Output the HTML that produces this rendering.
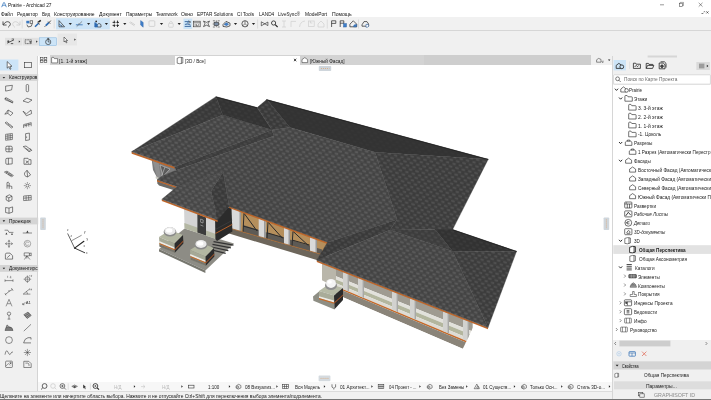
<!DOCTYPE html>
<html lang="ru"><head><meta charset="utf-8"><title>Prairie - Archicad 27</title>
<style>
html,body{margin:0;padding:0;}
body{width:711px;height:400px;overflow:hidden;background:#fff;position:relative;
 font-family:"Liberation Sans","DejaVu Sans",sans-serif;color:#222;font-size:4.6px;line-height:1;}
.a{position:absolute;}
.t{position:absolute;white-space:nowrap;transform-origin:0 50%;}
svg{position:absolute;left:0;top:0;overflow:visible;}
</style></head><body><div id="app" style="will-change:opacity;position:absolute;left:0;top:0;width:711px;height:400px;overflow:hidden">
<div class="a" style="left:0.0px;top:17.0px;width:711.0px;height:13.4px;background:#f1f1f1;"></div>
<div class="a" style="left:0.0px;top:30.3px;width:711.0px;height:0.7px;background:#d6d6d6;"></div>
<div class="a" style="left:0.0px;top:31.0px;width:711.0px;height:24.5px;background:#f0f0f0;"></div>
<div class="a" style="left:38.5px;top:55.3px;width:552.0px;height:9.5px;background:#d3d3d3;"></div>
<div class="a" style="left:38.5px;top:55.3px;width:11.5px;height:9.5px;background:#f4f4f4;"></div>
<div class="a" style="left:174.6px;top:55.6px;width:125.4px;height:9.2px;background:#fff;"></div>
<div class="a" style="left:424.0px;top:55.3px;width:166.5px;height:9.5px;background:#cecece;"></div>
<div class="a" style="left:590.5px;top:55.3px;width:22.0px;height:9.5px;background:#f0f0f0;"></div>
<div class="a" style="left:0.0px;top:55.5px;width:38.4px;height:335.2px;background:#f0f0f0;border-right:.6px solid #d4d4d4;box-sizing:border-box;"></div>
<div class="a" style="left:612.3px;top:55.5px;width:98.7px;height:344.5px;background:#f0f0f0;border-left:.6px solid #d6d6d6;box-sizing:border-box;"></div>
<div class="a" style="left:613.2px;top:84.6px;width:97.8px;height:255.6px;background:#fff;"></div>
<div class="a" style="left:38.4px;top:382.0px;width:574.0px;height:9.2px;background:#f7f7f7;"></div>
<div class="a" style="left:0.0px;top:390.8px;width:612.3px;height:9.2px;background:#f1f1f1;"></div>
<div class="a" style="left:0.0px;top:390.7px;width:612.3px;height:0.6px;background:#dcdcdc;"></div>
<div class="a" style="left:0.0px;top:399.0px;width:711.0px;height:1.0px;background:#777;"></div>
<svg width="711" height="400" viewBox="0 0 711 400">
<defs>
<pattern id="sh" width="6.4" height="6.6" patternUnits="userSpaceOnUse" patternTransform="matrix(1 .26 -.12 1 0 0)">
<ellipse cx="1.9" cy="1.6" rx="1.9" ry="1.0" fill="#fff" opacity=".10"/>
<ellipse cx="5.1" cy="4.9" rx="1.9" ry="1.0" fill="#fff" opacity=".10"/>
<ellipse cx="5.1" cy="1.7" rx="1.3" ry=".9" fill="#000" opacity=".10"/>
<ellipse cx="1.9" cy="5.0" rx="1.3" ry=".9" fill="#000" opacity=".10"/>
<path d="M0 3.3 H6.4 M0 6.6 H6.4" stroke="#000" stroke-width=".5" opacity=".10"/>
</pattern>
</defs>
<polygon points="151.6,158.5 175.0,167.0 175.0,181.0 161.0,179.0 157.0,177.5 153.0,170.0" fill="#7b7b7b" />
<polygon points="152.4,160.0 158.6,162.6 161.0,178.6 157.0,177.0" fill="#8f8f8f" />
<path d="M160 165 L170 169 L163 176.5 Z M165 167 L161.5 176" stroke="#b9b9b9" stroke-width=".7" fill="#5b5b5b"/>
<polygon points="155.6,176.6 160.8,178.6 160.6,180.2 155.8,178.4" fill="#c9c9c0" />
<polygon points="157.2,181.0 176.5,187.6 176.5,191.0 159.0,185.6 157.4,183.4" fill="#6b6b68" />
<polygon points="229.0,205.6 328.0,242.3 326.0,255.7 229.0,228.0" fill="#b58f5c" />
<polygon points="243.0,225.0 322.0,249.6 322.0,254.6 243.0,232.0" fill="#5d5a55" />
<polygon points="231.0,207.4 241.0,211.1 241.0,231.9 231.0,229.0" fill="#d9d9d9" />
<polygon points="239.5,211.1 241.0,211.1 241.0,231.9 239.5,231.9" fill="#9a9a9a" />
<polygon points="258.7,217.6 265.5,220.1 265.5,238.9 258.7,237.0" fill="#d9d9d9" />
<polygon points="264.0,220.1 265.5,220.1 265.5,238.9 264.0,238.9" fill="#9a9a9a" />
<polygon points="284.0,227.0 290.0,229.2 290.0,245.9 284.0,244.2" fill="#d9d9d9" />
<polygon points="288.5,229.2 290.0,229.2 290.0,245.9 288.5,245.9" fill="#9a9a9a" />
<polygon points="310.0,236.6 317.0,239.2 317.0,253.6 310.0,251.6" fill="#d9d9d9" />
<polygon points="315.5,239.2 317.0,239.2 317.0,253.6 315.5,253.6" fill="#9a9a9a" />
<path d="M244.0 213.2 L257.0 231.0 M244.0 213.2 L243.0 232.0 M243.0 226.0 L258.0 230.3" stroke="#2b2b2b" stroke-width="1" fill="none"/>
<path d="M268.0 222.1 L282.5 238.3 M268.0 222.1 L267.0 238.8 M267.0 232.8 L283.5 237.6" stroke="#2b2b2b" stroke-width="1" fill="none"/>
<path d="M293.0 231.3 L308.5 245.7 M293.0 231.3 L292.0 246.0 M292.0 240.0 L309.5 245.0" stroke="#2b2b2b" stroke-width="1" fill="none"/>
<polygon points="229.0,228.0 327.0,256.0 325.0,262.4 229.0,233.6" fill="#6d665b" />
<path d="M229 228.0 L326 255.7" stroke="#a8672f" stroke-width=".8" fill="none"/>
<clipPath id="rwc"><polygon points="318.0,250.0 474.2,321.1 474.2,325.1 462.8,348.8 318.0,286.6"/></clipPath>
<g clip-path="url(#rwc)">
<polygon points="322.0,262.2 336.0,267.7 336.0,287.4 322.0,280.2" fill="#b9b6aa" />
<polygon points="336.0,267.7 472.7,321.5 472.7,331.6 336.0,276.2" fill="#9f9b91" />
<polygon points="336.0,276.2 472.7,331.6 472.7,335.3 336.0,279.4" fill="#e2e1db" />
<polygon points="336.0,279.4 472.7,335.3 472.7,340.0 336.0,283.3" fill="#b3b69e" />
<polygon points="336.0,283.3 472.7,340.0 472.7,343.4 336.0,286.2" fill="#dddcd5" />
<polygon points="336.0,286.2 472.7,343.4 472.7,345.2 336.0,287.7" fill="#c56a2a" />
<polygon points="336.0,287.7 472.7,345.2 472.7,353.1 336.0,294.3" fill="#8a8479" />
<polygon points="343.0,271.9 349.0,274.2 349.0,291.6 343.0,289.1" fill="#d2d2cf" />
<polygon points="347.6,273.7 349.0,274.2 349.0,291.6 347.6,291.0" fill="#a8a8a6" />
<polygon points="358.0,277.8 364.0,280.1 364.0,297.9 358.0,295.4" fill="#d2d2cf" />
<polygon points="362.6,279.6 364.0,280.1 364.0,297.9 362.6,297.3" fill="#a8a8a6" />
<polygon points="392.0,291.2 398.0,293.6 398.0,312.1 392.0,309.6" fill="#d2d2cf" />
<polygon points="396.6,293.0 398.0,293.6 398.0,312.1 396.6,311.5" fill="#a8a8a6" />
<polygon points="410.0,298.3 416.0,300.7 416.0,319.7 410.0,317.1" fill="#d2d2cf" />
<polygon points="414.6,300.1 416.0,300.7 416.0,319.7 414.6,319.1" fill="#a8a8a6" />
<polygon points="443.0,311.3 449.0,313.7 449.0,333.5 443.0,331.0" fill="#d2d2cf" />
<polygon points="447.6,313.2 449.0,313.7 449.0,333.5 447.6,332.9" fill="#a8a8a6" />
<polygon points="463.0,319.2 469.0,321.6 469.0,341.8 463.0,339.3" fill="#d2d2cf" />
<polygon points="467.6,321.1 469.0,321.6 469.0,341.8 467.6,341.3" fill="#a8a8a6" />
</g>
<polygon points="313.0,296.5 319.0,291.5 334.4,296.0 334.6,309.5 313.4,300.8" fill="#8e8e84" />
<polygon points="319.0,291.0 329.0,284.0 343.0,288.0 334.0,295.4" fill="#b6baa6" />
<polygon points="319.0,291.0 334.0,295.4 334.2,303.5 319.0,298.6" fill="#a9ac99" />
<polygon points="319.0,296.2 334.0,300.6 334.0,302.4 319.0,298.0" fill="#ecebe6" />
<polygon points="319.0,298.0 334.0,302.4 334.0,303.7 319.0,299.3" fill="#c56a2a" />
<polygon points="334.0,295.4 343.0,288.0 343.0,300.0 334.5,309.3" fill="#2b2b2b" />
<polygon points="334.1,302.4 343.0,294.4 343.0,295.6 334.1,303.7" fill="#a9562a" />
<ellipse cx="331" cy="285.4" rx="6" ry="4.6" fill="#8f8f8f"/>
<ellipse cx="331" cy="283.4" rx="5" ry="4.5" fill="#f4f4f4"/>
<ellipse cx="329.6" cy="282" rx="2.2" ry="1.8" fill="#fff"/>
<polygon points="159.0,249.0 184.6,228.4 234.0,243.4 205.4,270.6" fill="#8d8c85" />
<polygon points="159.0,249.0 205.4,270.6 205.4,273.0 159.0,251.4" fill="#77776f" />
<path d="M213.5 241.6 L233.5 245.2" stroke="#333" stroke-width="1.2"/>
<path d="M212.5 244.3 L230.9 247.9" stroke="#333" stroke-width="1.2"/>
<path d="M211.5 247.0 L228.3 250.6" stroke="#333" stroke-width="1.2"/>
<path d="M210.5 249.7 L225.7 253.3" stroke="#333" stroke-width="1.2"/>
<polygon points="184.0,207.0 216.0,220.0 216.0,239.0 184.6,228.4" fill="#d4d4d4" />
<polygon points="184.3,223.0 216.0,234.0 216.0,239.0 184.6,228.4" fill="#b4b7a3" />
<polygon points="197.4,214.0 206.0,217.4 206.0,235.4 197.4,232.4" fill="#3c3c3c" />
<path d="M200.6 219 l2.6 1 l-.2 3 l-2.4 -.8 z M200.4 225 l3 1.2" stroke="#bdbdbd" stroke-width=".6" fill="none"/>
<polygon points="215.0,214.0 231.4,206.0 232.4,231.4 217.0,241.0 215.4,239.0" fill="#2b2b2b" />
<path d="M215.6 233.4 L232.2 224.4" stroke="#b55f28" stroke-width="1" fill="none"/>
<path d="M215.6 229.4 L232.2 220.4" stroke="#454545" stroke-width=".6" fill="none"/>
<polygon points="159.0,237.0 170.0,230.0 183.0,235.0 174.6,243.6" fill="#b3b7a2" />
<polygon points="159.0,237.0 174.6,243.6 174.8,252.6 159.6,246.6" fill="#a6a996" />
<polygon points="159.2,241.0 174.7,247.4 174.7,249.2 159.3,243.0" fill="#ecebe6" />
<polygon points="159.3,243.0 174.7,249.2 174.7,250.4 159.4,244.2" fill="#c56a2a" />
<polygon points="159.4,244.2 174.7,250.4 174.8,252.8 159.6,246.8" fill="#77756c" />
<polygon points="174.6,243.6 183.0,235.0 183.4,243.6 174.8,252.8" fill="#2c2c2c" />
<polygon points="174.7,249.2 183.3,240.6 183.3,241.8 174.7,250.4" fill="#a9562a" />
<ellipse cx="170.0" cy="231.9" rx="6.4" ry="4.6" fill="#8a8a8a"/>
<ellipse cx="170.0" cy="231.0" rx="5.6" ry="3.9" fill="#e9e9e9"/>
<ellipse cx="169.2" cy="230.4" rx="3.2" ry="2.2" fill="#ffffff"/>
<polygon points="190.0,250.0 201.0,243.0 214.0,248.0 205.6,256.6" fill="#b3b7a2" />
<polygon points="190.0,250.0 205.6,256.6 205.8,265.6 190.6,259.6" fill="#a6a996" />
<polygon points="190.2,254.0 205.7,260.4 205.7,262.2 190.3,256.0" fill="#ecebe6" />
<polygon points="190.3,256.0 205.7,262.2 205.7,263.4 190.4,257.2" fill="#c56a2a" />
<polygon points="190.4,257.2 205.7,263.4 205.8,265.8 190.6,259.8" fill="#77756c" />
<polygon points="205.6,256.6 214.0,248.0 214.4,256.6 205.8,265.8" fill="#2c2c2c" />
<polygon points="205.7,262.2 214.3,253.6 214.3,254.8 205.7,263.4" fill="#a9562a" />
<ellipse cx="201.0" cy="244.9" rx="6.4" ry="4.6" fill="#8a8a8a"/>
<ellipse cx="201.0" cy="244.0" rx="5.6" ry="3.9" fill="#e9e9e9"/>
<ellipse cx="200.2" cy="243.4" rx="3.2" ry="2.2" fill="#ffffff"/>
<polygon points="131.7,151.7 174.8,166.8 174.8,168.8 131.7,153.7" fill="#c0672a" />
<polygon points="157.0,179.8 176.5,186.5 176.5,188.1 157.0,181.4" fill="#c0672a" />
<polygon points="161.8,199.3 217.6,220.1 217.6,221.9 161.8,201.1" fill="#c0672a" />
<polygon points="229.2,206.4 328.2,242.6 328.2,244.3 229.2,208.1" fill="#c0672a" />
<polygon points="316.8,260.2 488.0,327.5 488.0,329.3 316.8,262.0" fill="#c0672a" />
<polygon points="216.0,96.7 131.7,151.7 222.6,115.0" fill="#3b3b3b" stroke="#3b3b3b" stroke-width=".4"/>
<polygon points="216.0,96.7 131.7,151.7 222.6,115.0" fill="url(#sh)" opacity="0.60"/>
<polygon points="216.0,96.7 257.2,107.6 272.0,130.0 222.6,115.0" fill="#343434" stroke="#343434" stroke-width=".4"/>
<polygon points="216.0,96.7 257.2,107.6 272.0,130.0 222.6,115.0" fill="url(#sh)" opacity="0.30"/>
<polygon points="131.7,151.7 222.6,115.0 272.0,130.0 174.8,166.8" fill="#494949" stroke="#494949" stroke-width=".4"/>
<polygon points="131.7,151.7 222.6,115.0 272.0,130.0 174.8,166.8" fill="url(#sh)" opacity="1.00"/>
<polygon points="174.8,166.8 272.0,130.0 274.0,136.0 175.6,170.6" fill="#3e3e3e" stroke="#3e3e3e" stroke-width=".4"/>
<polygon points="174.8,166.8 272.0,130.0 274.0,136.0 175.6,170.6" fill="url(#sh)" opacity="0.60"/>
<polygon points="266.7,99.6 290.0,127.5 272.0,130.0 257.2,107.6" fill="#3d3d3d" stroke="#3d3d3d" stroke-width=".4"/>
<polygon points="266.7,99.6 290.0,127.5 272.0,130.0 257.2,107.6" fill="url(#sh)" opacity="0.80"/>
<polygon points="266.7,99.6 488.2,159.3 375.0,152.2 290.0,127.5" fill="#333333" stroke="#333333" stroke-width=".4"/>
<polygon points="266.7,99.6 488.2,159.3 375.0,152.2 290.0,127.5" fill="url(#sh)" opacity="0.15"/>
<polygon points="274.0,136.0 272.0,130.0 290.0,127.5 375.0,152.2 397.0,219.5 327.6,242.2 328.2,242.4 229.2,206.4 223.2,171.7 177.0,186.8 176.5,186.5 157.0,179.8 162.0,176.0 175.6,170.6" fill="#494949" stroke="#494949" stroke-width=".4"/>
<polygon points="274.0,136.0 272.0,130.0 290.0,127.5 375.0,152.2 397.0,219.5 327.6,242.2 328.2,242.4 229.2,206.4 223.2,171.7 177.0,186.8 176.5,186.5 157.0,179.8 162.0,176.0 175.6,170.6" fill="url(#sh)" opacity="1.00"/>
<polygon points="375.0,152.2 488.2,159.3 452.6,229.5 390.0,230.0 397.0,219.5" fill="#404040" stroke="#404040" stroke-width=".4"/>
<polygon points="375.0,152.2 488.2,159.3 452.6,229.5 390.0,230.0 397.0,219.5" fill="url(#sh)" opacity="0.90"/>
<polygon points="397.0,219.5 390.0,230.0 316.8,260.2 327.6,242.2" fill="#3d3d3d" stroke="#3d3d3d" stroke-width=".4"/>
<polygon points="397.0,219.5 390.0,230.0 316.8,260.2 327.6,242.2" fill="url(#sh)" opacity="0.80"/>
<polygon points="390.0,230.0 452.6,251.3 488.0,327.5 316.8,260.2" fill="#494949" stroke="#494949" stroke-width=".4"/>
<polygon points="390.0,230.0 452.6,251.3 488.0,327.5 316.8,260.2" fill="url(#sh)" opacity="1.00"/>
<polygon points="390.0,230.0 452.6,229.5 435.0,229.6 452.6,251.3" fill="#3f3f3f" stroke="#3f3f3f" stroke-width=".4"/>
<polygon points="390.0,230.0 452.6,229.5 435.0,229.6 452.6,251.3" fill="url(#sh)" opacity="0.60"/>
<polygon points="435.0,229.6 452.6,229.5 516.5,251.3 452.6,251.3" fill="#333333" stroke="#333333" stroke-width=".4"/>
<polygon points="435.0,229.6 452.6,229.5 516.5,251.3 452.6,251.3" fill="url(#sh)" opacity="0.40"/>
<polygon points="452.6,251.3 516.5,251.3 488.0,327.5" fill="#404040" stroke="#404040" stroke-width=".4"/>
<polygon points="452.6,251.3 516.5,251.3 488.0,327.5" fill="url(#sh)" opacity="0.90"/>
<polygon points="161.8,199.3 177.0,186.8 223.2,171.7 211.0,190.9 217.6,220.1" fill="#4c4c4c" stroke="#4c4c4c" stroke-width=".4"/>
<polygon points="161.8,199.3 177.0,186.8 223.2,171.7 211.0,190.9 217.6,220.1" fill="url(#sh)" opacity="1.00"/>
<polygon points="223.2,171.7 229.2,206.4 217.6,220.1 211.0,190.9" fill="#3d3d3d" stroke="#3d3d3d" stroke-width=".4"/>
<polygon points="223.2,171.7 229.2,206.4 217.6,220.1 211.0,190.9" fill="url(#sh)" opacity="0.80"/>
<path d="M216.0 97.0 L257.2 107.9 M266.7 99.9 L488.2 159.6 M452.6 229.8 L516.5 251.6" stroke="#232323" stroke-width=".9" fill="none"/>
<path d="M222.6 115.0 L272.0 130.0" stroke="#3a3a3a" stroke-width=".5" fill="none"/>
<path d="M177 186.8 L223.2 171.7" stroke="#444444" stroke-width=".6" fill="none"/>
<g stroke="#222" fill="none" stroke-linecap="round"><path d="M74.6 248.1 L84.7 252.7" stroke-width=".9"/><path d="M74.6 248.1 L83.9 241.3" stroke-width="1.1"/><path d="M74.6 248.1 L67.8 233.8" stroke-width=".7"/><path d="M72 240.5 L81.3 235.4" stroke-width=".5"/></g>
<g font-size="3" fill="#444" font-family="Liberation Sans, sans-serif"><text x="86" y="253.7">x</text><text x="86.5" y="240">y</text><text x="84" y="232.5">y</text><text x="67" y="231">z</text><text x="70.5" y="236.5">z</text><text x="83.5" y="246.5">x</text></g>
</svg>
<svg width="711" height="400" viewBox="0 0 711 400">
<path d="M1.6 7.2 L3.6 2.6 Q4 2 4.5 2.7 L6.4 7.2 M2.3 5.8 Q4 4.2 5.8 5.8" stroke="#2a6fb8" stroke-width=".7" fill="none"/>
<path d="M660 4.8 H664" stroke="#333" stroke-width=".5"/>
<rect x="679.4" y="3.2" width="3.2" height="3.2" fill="none" stroke="#333" stroke-width=".5"/><path d="M680.3 3.2 V2.4 H683.5 V5.6 H682.6" fill="none" stroke="#333" stroke-width=".4"/>
<path d="M698.7 2.8 L702.5 6.6 M702.5 2.8 L698.7 6.6" stroke="#333" stroke-width=".5"/>
<path d="M701.5 13.5 H703.3 M703.6 12 Q704.4 11.2 705.2 12 M706.3 11.3 L708.5 13.5 M708.5 11.3 L706.3 13.5" stroke="#222" stroke-width=".6" fill="none"/>
<rect x="56" y="18.2" width="53.8" height="11.2" fill="#cce4f7"/>
<rect x="183.4" y="18.6" width="8.8" height="10.4" fill="#cce4f7"/>
<path d="M3 21.4 V25 H6.6 M3.2 24.8 Q6 20.4 9.4 22.2 Q11.8 24.6 8 27.4" stroke="#333" stroke-width=".8" fill="none"/>
<path d="M20 21.4 V25 H16.4 M19.8 24.8 Q17 20.4 13.6 22.2 Q11.2 24.6 15 27.4" stroke="#cdcdcd" stroke-width=".8" fill="none"/>
<path d="M22.2 19.5 V28.5" stroke="#cfcfcf" stroke-width=".6"/>
<g transform="translate(29.5 23.8)"><rect x="-3.2" y="-3" width="3" height="2.6" fill="#3a78c0"/><rect x="0.6" y="-3" width="2.6" height="2.6" fill="none" stroke="#333" stroke-width=".6"/><path d="M-2.6 .8 L-1.4 3.2 L1.8 2.4 L2.6 .2" stroke="#333" stroke-width=".7" fill="none"/></g>
<g transform="translate(38 23.8)"><path d="M-3 3 L.6 -.6" stroke="#2d6bb3" stroke-width="1.5"/><path d="M.4 -1.6 L2.8 -3.4" stroke="#222" stroke-width="1.6"/><path d="M-.6 -1.8 L1.8 .6" stroke="#222" stroke-width=".8"/></g>
<g transform="translate(47.6 23.8)"><path d="M-3.2 3.2 L-1.6 1.6" stroke="#222" stroke-width=".6"/><path d="M-1.8 1.8 L1.2 -1.2" stroke="#2d6bb3" stroke-width="1.7"/><path d="M.6 -2.2 L2.6 -.2 M1.6 -1.4 L3.2 -3.2" stroke="#222" stroke-width=".8"/></g>
<path d="M54.2 19.5 V28.5" stroke="#cfcfcf" stroke-width=".6"/>
<g transform="translate(61.6 23.8)" stroke="#333" fill="none" stroke-width=".7"><path d="M-2.6 3 V-3.2 L3 3 Z"/><path d="M-2.6 .6 Q-.4 .6 .2 3" stroke="#2d6bb3"/><path d="M-1 1.6 h1.4 v1.4" stroke-width=".4"/></g>
<path d="M68.7 23.1 h3.2 l-1.6 1.8 z" fill="#222"/>
<g transform="translate(79.3 23.8)" stroke="#555" fill="none" stroke-width=".6"><path d="M-3.4 1 H3.4" stroke="#2d6bb3" stroke-width=".8"/><path d="M-2.6 2.8 L2.8 -2.4"/><path d="M-.6 -.4 l1 1" /></g>
<path d="M87.0 23.1 h3.2 l-1.6 1.8 z" fill="#222"/>
<g transform="translate(97.8 23.8)" stroke="#333" fill="none" stroke-width=".7"><path d="M-3 3.2 V-1.2 L-.4 .6 V3.2 Z" fill="#2d6bb3" stroke="#2d6bb3"/><path d="M-.4 3.2 H3.2 V.8 L1.2 -.4 L-.4 .6"/><circle cx="-1.6" cy="-2.4" r=".9" fill="#333" stroke="none"/></g>
<path d="M104.8 23.1 h3.2 l-1.6 1.8 z" fill="#222"/>
<g transform="translate(115.8 23.8)" stroke="#222" stroke-width=".9" fill="none"><path d="M-3.2 -1.4 H-.4 M.6 -1.4 H3.2 M-3.2 1.6 H-.4 M.6 1.6 H3.2 M-1.5 -3.2 V-.4 M-1.5 .6 V3.2 M1.7 -3.2 V-.4 M1.7 .6 V3.2"/></g>
<path d="M123.2 23.1 h3.2 l-1.6 1.8 z" fill="#222"/>
<path d="M129.4 22.4 L134.4 25.8 M130.4 21.8 l4.6 3" stroke="#c9c9c9" stroke-width=".8"/>
<path d="M140.6 20.6 L143.2 22.4 V27.2 L140.6 25 Z" fill="#3f7fca" stroke="#2a5e9e" stroke-width=".4"/>
<rect x="149" y="20.8" width="5.8" height="5.6" rx=".8" fill="none" stroke="#c6c6c6" stroke-width=".7"/>
<path d="M159.9 23.1 h3.2 l-1.6 1.8 z" fill="#222"/>
<g stroke="#cdcdcd" stroke-width=".7" fill="none"><rect x="168.6" y="23.4" width="4.6" height="3.8" rx=".6"/><path d="M169.6 23.4 V22.2 Q170.9 20 172.2 22.2 V23.4"/></g>
<path d="M177.6 23.1 h3.2 l-1.6 1.8 z" fill="#222"/>
<g transform="translate(187.7 23.8)" stroke="#1f4f8a" stroke-width=".8" fill="none"><path d="M-3 -2.2 H1.2 L-.6 -.4 M-3 2.6 H3.2 M-2.8 .6 L.2 .2 L3 1.4" /><path d="M.6 -3 l2.4 1.2 l-2 1.4" stroke="#222" stroke-width=".6"/></g>
<g transform="translate(196.9 23.8)" stroke="#333" stroke-width=".6" fill="none"><rect x="-3.3" y="-2.6" width="6.6" height="5.6"/><path d="M-3.3 -1 H3.3 M-1.8 .4 V2 M-.4 .4 v1.6 h1.4 M1.8 .4 v1.6"/></g>
<g transform="translate(206.5 23.8)" stroke="#333" stroke-width=".7" fill="none"><path d="M-3 -2.8 Q0 0 -3 2.8 M3 -2.8 Q0 0 3 2.8 M-3 -2.8 Q0 0 3 -2.8 M-3 2.8 Q0 0 3 2.8"/></g>
<g transform="translate(216.3 23.8)" stroke="#333" stroke-width=".6" fill="none"><rect x="-2.2" y="-1.6" width="4.4" height="3.4" fill="#7d8fa6"/><path d="M-3.4 -3 h2 M1.4 -3 h2 M-3.4 3.2 h2 M1.4 3.2 h2 M0 -3.4 v1.6 M0 2 v1.4 M-3.6 .2 h1.2 M2.4 .2 h1.2"/></g>
<g transform="translate(226.6 23.8)" stroke="#222" stroke-width=".7" fill="none"><path d="M-3.6 .8 L-.6 -2.4 L3.4 -.6 V2 L.2 3.2 L-3.6 2.6 Z"/><path d="M-2.4 .8 L-.4 -1 L2 .2 L.2 2 Z" fill="#3f7fca" stroke="#2a5e9e" stroke-width=".5"/></g>
<path d="M233.9 23.1 h3.2 l-1.6 1.8 z" fill="#222"/>
<g transform="translate(245 23.8)" stroke="#222" stroke-width=".7" fill="none"><circle r="3.1"/><path d="M0 -3 V0 L-2.4 2 M0 0 L2.4 2" stroke-width=".5"/></g>
<path d="M251.9 23.1 h3.2 l-1.6 1.8 z" fill="#222"/>
<path d="M257.6 19.5 V28.5" stroke="#cfcfcf" stroke-width=".6"/>
<g transform="translate(264.7 23.8)" stroke="#222" stroke-width=".6" fill="none"><path d="M-3.4 -2 L3.2 1.8 M-3.4 2 L3.2 -1.8 M-3.4 -2 V2 M3.2 -1.8 V1.8"/></g>
<g transform="translate(274.4 23.8)" stroke="#222" stroke-width=".8" fill="none"><circle cx="-.8" cy="-.8" r="2.1"/><path d="M.8 .8 L3.2 3.2" stroke-width="1.1"/></g>
<g stroke="#cfcfcf" stroke-width=".7" fill="none"><path d="M282 21 h4 M284 21 v6 M282 27 h4"/><path d="M291 27 V21.4 H296"/><path d="M299.6 27 Q300 21.6 305 21"/><rect x="308.6" y="21" width="5.6" height="5.6"/><path d="M310.4 21 v2 h2"/><path d="M318 24 L321 21 L324 24 V27 H318 Z"/></g>
<path d="M327.3 19.5 V28.5" stroke="#cfcfcf" stroke-width=".6"/>
<g transform="translate(333.6 23.8)" stroke="#222" stroke-width=".7" fill="none"><path d="M-2 3.2 V-3 H2.2 V-.4 H-2"/></g>
<g transform="translate(343.2 23.8)" stroke="#222" stroke-width=".7" fill="none"><path d="M-3 3.2 V-3 H.6 V-.6 H-3"/><rect x=".4" y="-.2" width="2.8" height="3.4" fill="#3f7fca" stroke="#2a5e9e" stroke-width=".5"/></g>
<g transform="translate(353.3 23.8)" stroke="#222" stroke-width=".7" fill="none"><path d="M-3.4 .4 L0 -3 L3.4 .4 V3 H-3.4 Z"/><path d="M.2 3 Q.2 .4 3.2 .6 V3 Z" fill="#3f7fca" stroke="#2a5e9e" stroke-width=".5"/></g>
<path d="M358.5 19.5 V28.5" stroke="#cfcfcf" stroke-width=".6"/>
<g transform="translate(365.4 23.8)" stroke="#222" stroke-width=".7" fill="none"><path d="M-3.4 1 L-1.4 -2.2 H1.6 L3.2 .2 V2.4 H-3.4 Z"/><path d="M.6 .6 h2 l1 1.6 l-1.6 1.2 h-1.4 z" fill="#fff" stroke="#2a5e9e" stroke-width=".6"/></g>
<rect x="5" y="37.8" width="17" height="7.7" fill="#e1e1e1"/>
<rect x="22.5" y="37.8" width="16.4" height="7.7" fill="#e1e1e1"/>
<rect x="39.4" y="37.8" width="17" height="7.7" fill="#cce4f7" stroke="#7fb2dd" stroke-width=".5"/>
<rect x="57.6" y="33.6" width="19.4" height="11.9" fill="#e7e7e7"/>
<g transform="translate(10.6 41.6)" stroke="#222" stroke-width=".7" fill="none"><path d="M-3.4 1.6 L3 -1.6 M-3.2 -.2 h2 M-2.4 -1.4 v2.6 M.2 2 h2.4"/><path d="M1 -2.6 l2 -.2 l-.6 2" stroke-width=".5"/></g>
<path d="M18.8 40.4 v2.4 l1.4 -1.2 z" fill="#222"/>
<g transform="translate(28.8 41.6)" stroke="#222" stroke-width=".6" fill="none"><rect x="-3.6" y="-1.8" width="6.2" height="3.8" stroke-dasharray="1 .5"/><path d="M.6 -1 l2.2 1.6 l-1.2 .2 l-.4 1 z" fill="#222" stroke="none"/></g>
<path d="M36.2 40.4 v2.4 l1.4 -1.2 z" fill="#222"/>
<g transform="translate(48.2 42)" stroke="#1e1e1e" stroke-width=".6" fill="none"><circle r="2.6"/><path d="M0 -3.6 V0 H1.6 M-1 -3.6 h2" /></g>
<path d="M64 37 V42 L65.2 40.9 L66.2 42.9 L67 42.5 L66 40.6 H67.6 Z" fill="#fff" stroke="#222" stroke-width=".55"/>
<path d="M74.4 38.4 v2.4 l1.4 -1.2 z" fill="#222"/>
</svg>
<span class="t" style="left:8.4px;top:1.7px;font-size:5.56px;height:6.67px;line-height:6.67px;color:#111;transform:scaleX(0.871);">Prairie - Archicad 27</span>
<span class="t" style="left:1.3px;top:10.5px;font-size:5.45px;height:6.54px;line-height:6.54px;color:#111;transform:scaleX(0.890);">Файл</span>
<span class="t" style="left:17.2px;top:10.5px;font-size:5.45px;height:6.54px;line-height:6.54px;color:#111;transform:scaleX(0.889);">Редактор</span>
<span class="t" style="left:42.3px;top:10.5px;font-size:5.45px;height:6.54px;line-height:6.54px;color:#111;transform:scaleX(0.843);">Вид</span>
<span class="t" style="left:54.4px;top:10.5px;font-size:5.45px;height:6.54px;line-height:6.54px;color:#111;transform:scaleX(0.921);">Конструирование</span>
<span class="t" style="left:98.7px;top:10.5px;font-size:5.45px;height:6.54px;line-height:6.54px;color:#111;transform:scaleX(0.945);">Документ</span>
<span class="t" style="left:125.8px;top:10.5px;font-size:5.45px;height:6.54px;line-height:6.54px;color:#111;transform:scaleX(0.903);">Параметры</span>
<span class="t" style="left:155.7px;top:10.5px;font-size:5.45px;height:6.54px;line-height:6.54px;color:#111;transform:scaleX(0.868);">Teamwork</span>
<span class="t" style="left:181.3px;top:10.5px;font-size:5.45px;height:6.54px;line-height:6.54px;color:#111;transform:scaleX(0.941);">Окно</span>
<span class="t" style="left:197.2px;top:10.5px;font-size:5.45px;height:6.54px;line-height:6.54px;color:#111;transform:scaleX(0.865);">EPTAR Solutions</span>
<span class="t" style="left:237.0px;top:10.5px;font-size:5.45px;height:6.54px;line-height:6.54px;color:#111;transform:scaleX(0.870);">CI Tools</span>
<span class="t" style="left:258.5px;top:10.5px;font-size:5.45px;height:6.54px;line-height:6.54px;color:#111;transform:scaleX(0.867);">LAND4</span>
<span class="t" style="left:278.2px;top:10.5px;font-size:5.45px;height:6.54px;line-height:6.54px;color:#111;transform:scaleX(0.847);">LiveSync®</span>
<span class="t" style="left:304.6px;top:10.5px;font-size:5.45px;height:6.54px;line-height:6.54px;color:#111;transform:scaleX(0.895);">ModelPort</span>
<span class="t" style="left:331.9px;top:10.5px;font-size:5.45px;height:6.54px;line-height:6.54px;color:#111;transform:scaleX(0.937);">Помощь</span>
<svg width="711" height="400" viewBox="0 0 711 400">
<rect x="0" y="59.5" width="18.4" height="11" fill="#cce4f7"/>
<path d="M7.2 61.6 V68.2 L8.8 66.7 L10 69.3 L11 68.8 L9.8 66.3 H12 Z" fill="#fff" stroke="#222" stroke-width=".6"/>
<rect x="24.6" y="62.3" width="6.8" height="5.4" fill="none" stroke="#333" stroke-width=".6"/>
<rect x="0" y="74.2" width="38.2" height="6.7" fill="#d4d4d4"/>
<path d="M2.6 76.9 h2.6 l-1.3 1.6 z" fill="#222"/>
<rect x="0" y="217.6" width="38.2" height="6.8" fill="#d4d4d4"/>
<path d="M2.6 220.3 h2.6 l-1.3 1.6 z" fill="#222"/>
<rect x="0" y="265.0" width="38.2" height="6.8" fill="#d4d4d4"/>
<path d="M2.6 267.7 h2.6 l-1.3 1.6 z" fill="#222"/>
<g transform="translate(9.0 88.1)" stroke="#333" stroke-width="0.60" fill="none" stroke-linejoin="round"><path d="M-3.4 -2 L3.4 -2.8 L2.6 1.8 L-3.4 3 Z"/></g>
<g transform="translate(27.4 88.1)" stroke="#333" stroke-width="0.60" fill="none" stroke-linejoin="round"><rect x="-1.2" y="-3.6" width="2.4" height="7.2" rx="1"/></g>
<g transform="translate(9.0 100.4)" stroke="#333" stroke-width="0.60" fill="none" stroke-linejoin="round"><path d="M-4 -2.2 L-2.6 -2.6 L4 1.2 L3.6 2.4 Z M-4 -2.2 L-4 -.8 L3.6 2.4"/></g>
<g transform="translate(27.4 100.4)" stroke="#333" stroke-width="0.60" fill="none" stroke-linejoin="round"><path d="M-4.4 .6 L-.6 -2.2 L4.6 -.4 L.8 2.2 Z"/></g>
<g transform="translate(9.0 112.8)" stroke="#333" stroke-width="0.60" fill="none" stroke-linejoin="round"><path d="M-4.2 1.4 L-.8 -2.8 L4 .2 L1.6 2.8 L-1.2 .6 L-4.2 1.4 M-.8 -2.8 L-1.2 .6"/></g>
<g transform="translate(27.4 112.8)" stroke="#333" stroke-width="0.60" fill="none" stroke-linejoin="round"><path d="M-4.4 -1.6 L-1 1 L3.6 -2.8 L4.2 .8 L-1 3 Z"/></g>
<g transform="translate(9.0 125.2)" stroke="#333" stroke-width="0.55" fill="none" stroke-linejoin="round"><path d="M-4 -2.4 L2.6 2.8 L4 1.8 L-2.6 -3.2 Z M-2.6 -1.4 l1.2 -.9 M-1.2 -.3 l1.2 -.9 M.2 .8 l1.2 -.9 M1.6 1.9 l1.2 -.9"/></g>
<g transform="translate(27.4 125.2)" stroke="#333" stroke-width="0.55" fill="none" stroke-linejoin="round"><path d="M-3.8 2.8 V-.6 L3.8 -2.6 V1 M-3.8 .8 L3.8 -1.2 M-1.2 2 V-1.2 M1.4 1.4 V-1.9"/></g>
<g transform="translate(9.0 136.9)" stroke="#333" stroke-width="0.55" fill="none" stroke-linejoin="round"><path d="M-3.4 -2.6 L3.4 -3.4 V2.6 L-3.4 3.4 Z M-1.1 -2.9 V3.1 M1.2 -3.1 V2.9 M-3.4 -.6 L3.4 -1.4 M-3.4 1.4 L3.4 .6"/></g>
<g transform="translate(27.4 136.9)" stroke="#333" stroke-width="0.60" fill="none" stroke-linejoin="round"><path d="M-1.8 -3.2 L2 -3.8 V3 L-1.8 3.6 Z M-.8 -.4 v1.4"/></g>
<g transform="translate(9.0 149.0)" stroke="#333" stroke-width="0.60" fill="none" stroke-linejoin="round"><rect x="-3.2" y="-2.8" width="6.4" height="5.6" rx="1.2"/><path d="M0 -2.8 V2.8 M-3.2 0 H3.2"/></g>
<g transform="translate(27.4 149.0)" stroke="#333" stroke-width="0.60" fill="none" stroke-linejoin="round"><path d="M-4.2 -2.4 L-1.4 -3 L4.2 1.4 L1.6 2.8 Z M-2 -1 L2.4 2 M2.4 -.8 l1.8 2.2"/></g>
<g transform="translate(9.0 161.3)" stroke="#333" stroke-width="0.60" fill="none" stroke-linejoin="round"><path d="M-3.2 -2 Q-3.2 -3 -2 -3 L3.2 -3.2 V2.6 L-2 3 Q-3.2 3 -3.2 2 Z M-.6 -3 V3"/></g>
<g transform="translate(27.4 161.3)" stroke="#333" stroke-width="0.60" fill="none" stroke-linejoin="round"><path d="M-3.4 -3 H.6 L1.6 -1.6 H3.6 V3 H-3.4 Z M-1.6 -.6 L1.6 2.2 M-1.6 2.2 Q0 -.4 1.6 -.4"/></g>
<g transform="translate(9.0 173.7)" stroke="#333" stroke-width="0.55" fill="none" stroke-linejoin="round"><path d="M-4.6 -1.6 L-2 -2.6 L4.4 1.8 L2.4 3 Z M-3.2 -2 L3.4 2.4 M-3 -.6 l2 -1 M-1 1 l2.2 -1.2 M.8 2 l2 -1"/></g>
<g transform="translate(27.4 173.7)" stroke="#333" stroke-width="0.60" fill="none" stroke-linejoin="round"><path d="M-.4 -3.4 L3.2 1.2 L.2 3.2 Q-3.6 2.6 -2.8 -.8 Z M-.4 -3.4 L.2 3.2"/></g>
<g transform="translate(9.0 185.6)" stroke="#333" stroke-width="0.60" fill="none" stroke-linejoin="round"><path d="M-2 -3 Q-.6 -4 .2 -2.6 L.2 .2 L2.8 .8 V3.4 M-2 -3 V3 M-2 .2 H.2 M.2 .4 V3.2"/></g>
<g transform="translate(27.4 185.6)" stroke="#333" stroke-width="0.60" fill="none" stroke-linejoin="round"><circle r="1.5"/><path d="M0 -3.6 V-2.4 M0 2.4 V3.6 M-3.6 0 H-2.4 M2.4 0 H3.6 M-2.6 -2.6 l.8 .8 M2.6 -2.6 l-.8 .8 M-2.6 2.6 l.8 -.8 M2.6 2.6 l-.8 -.8" stroke-width=".45"/></g>
<g transform="translate(9.0 198.0)" stroke="#333" stroke-width="0.60" fill="none" stroke-linejoin="round"><path d="M-2.8 -1.6 L.4 -3.2 L3 -1.8 V1.8 L-.2 3.4 L-2.8 2 Z M-2.8 -1.6 L-.2 -.2 L3 -1.8 M-.2 -.2 V3.4"/></g>
<g transform="translate(27.4 198.0)" stroke="#333" stroke-width="0.55" fill="none" stroke-linejoin="round"><path d="M-3.8 -2 L3.8 -2.6 V2 L-3.8 2.6 Z M-3.8 .2 L3.8 -.4 M-1.3 -2.2 V2.4 M1.3 -2.4 V2.2"/></g>
<g transform="translate(9.0 210.1)" stroke="#333" stroke-width="0.60" fill="none" stroke-linejoin="round"><path d="M-3.4 -2.6 L0 -2 L3.6 -3.2 V2 L0 3.2 L-3.4 2.4 Z M0 -2 V3.2"/></g>
<g transform="translate(9.0 231.8)" stroke="#333" stroke-width="0.55" fill="none" stroke-linejoin="round"><path d="M-4.4 -1.6 H-1.2 L0 .6 H4.4"/><path d="M-3.6 2.6 l1 -1.8 l1 1.8 z M2 3 l1 -1.8 l1 1.8 z" fill="#333" stroke="none"/></g>
<g transform="translate(27.4 231.8)" stroke="#333" stroke-width="0.55" fill="none" stroke-linejoin="round"><path d="M-4.6 1.2 H4.6"/><path d="M-1.2 1 l1.2 -2.2 l1.2 2.2 z" fill="#333" stroke="none"/></g>
<g transform="translate(9.0 243.7)" stroke="#333" stroke-width="0.60" fill="none" stroke-linejoin="round"><circle r=".7"/><path d="M0 -3.8 L-.9 -2 H.9 Z M0 3.8 L-.9 2 H.9 Z M-3.8 0 L-2 -.9 V.9 Z M3.8 0 L2 -.9 V.9 Z" stroke-width=".45"/></g>
<g transform="translate(27.4 243.7)" stroke="#333" stroke-width="0.60" fill="none" stroke-linejoin="round"><circle r="3.3" stroke="#777"/><path d="M1.4 -1.2 Q-1.8 -2.6 -1.8 0 Q-1.8 2.6 1.4 1.2" stroke="#777"/></g>
<g transform="translate(9.0 256.1)" stroke="#333" stroke-width="0.60" fill="none" stroke-linejoin="round"><path d="M-3.6 -1.6 Q-3.6 -3 -2.2 -3 H1 L3.6 -.4 V3 H-3.6 Z M-1.8 1.6 L1.2 -1.2"/></g>
<g transform="translate(27.4 256.1)" stroke="#333" stroke-width="0.55" fill="none" stroke-linejoin="round"><path d="M-3.2 -3.2 H2 V-.2 H-3.2 Z M2 -2.4 L3.8 -3.2 V-.2 L2 -1 M-.6 -.2 L-3 3.4 M-.6 -.2 L2.6 3.4 M-.6 -.2 V2.4"/></g>
<g transform="translate(9.0 279.2)" stroke="#333" stroke-width="0.50" fill="none" stroke-linejoin="round"><path d="M-4 1.4 H4 M-4 .2 V2.6 M4 .2 V2.6"/><path d="M-1.4 -1.4 v-2 M.2 -1.5 h.1 M1 -3 q1.6 -.2 .2 1.6 h1.2" stroke-width=".4"/></g>
<g transform="translate(27.4 279.2)" stroke="#333" stroke-width="0.50" fill="none" stroke-linejoin="round"><circle r="2.4"/><path d="M0 -3.8 V3.8 M-3.8 0 H3.8 M2.4 -2.8 v-1.4 M3.6 -4 q1.2 0 .2 1.2 h.8" stroke-width=".4"/></g>
<g transform="translate(9.0 291.3)" stroke="#333" stroke-width="0.55" fill="none" stroke-linejoin="round"><path d="M-3.6 3.2 L0 .2 L0 -1.2 M0 .2 L3.4 -1.8 M2.4 -3.2 L4 -.6 M-4 2 l1 2"/></g>
<g transform="translate(27.4 291.3)" stroke="#333" stroke-width="0.50" fill="none" stroke-linejoin="round"><path d="M-4.2 2.8 H3 M-4.2 2.8 L2.6 -2.6 M0 2.8 Q.2 .8 -1.2 .4"/><path d="M2.6 -1 v-1.6 M3.6 -2.6 q1 0 .2 1.2 h.8" stroke-width=".4"/></g>
<g transform="translate(9.0 302.9)" stroke="#555" stroke-width="0.60" fill="none" stroke-linejoin="round"><path d="M-3 3.4 L0 -3.6 L3 3.4 M-1.8 .8 H1.8"/></g>
<g transform="translate(27.4 302.9)" stroke="#333" stroke-width="0.55" fill="none" stroke-linejoin="round"><path d="M-4.6 1.8 L-2.2 -.6 M-4.6 1.8 v-1.6 M-4.6 1.8 h1.6"/></g>
<g transform="translate(9.0 315.3)" stroke="#333" stroke-width="0.55" fill="none" stroke-linejoin="round"><circle cy="-1.6" r="1.7"/><path d="M0 .1 V3.8 M-1.4 3.8 H1.4"/></g>
<g transform="translate(27.4 315.3)" stroke="#333" stroke-width="0.50" fill="none" stroke-linejoin="round"><path d="M-3.6 -.6 L.6 -3.2 L3.8 .2 L-.2 3.2 Z" fill="#9a9a9a"/><path d="M-2.4 .6 L1.8 -2 M-1.2 2 L3 -.8"/></g>
<g transform="translate(9.0 327.7)" stroke="#333" stroke-width="0.50" fill="none" stroke-linejoin="round"><path d="M-4 2.8 H4 Q3.6 -.6 0 -1 L-2 -2.8 Z" fill="#999"/><path d="M-3.6 1.4 H3.4 M-3 0 H2.4"/></g>
<g transform="translate(27.4 327.7)" stroke="#333" stroke-width="0.55" fill="none" stroke-linejoin="round"><path d="M-3.6 3.4 L3.6 -3.4"/></g>
<g transform="translate(9.0 340.1)" stroke="#333" stroke-width="0.55" fill="none" stroke-linejoin="round"><circle r="3.4"/></g>
<g transform="translate(27.4 340.1)" stroke="#333" stroke-width="0.60" fill="none" stroke-linejoin="round"><path d="M-3.8 2.8 H3.6 M-3.8 2.8 Q-3 -1.6 .6 -2.4 H3.6 V-.6"/></g>
<g transform="translate(9.0 352.5)" stroke="#333" stroke-width="0.55" fill="none" stroke-linejoin="round"><path d="M-4 2.2 Q-2.8 -4.6 -.6 .4 Q.8 3.6 2 .6 Q2.8 -1 4 -.4"/></g>
<g transform="translate(27.4 352.5)" stroke="#333" stroke-width="0.45" fill="none" stroke-linejoin="round"><path d="M0 -3.6 V3.6 M-3.6 0 H3.6 M-2.5 -2.5 L2.5 2.5 M-2.5 2.5 L2.5 -2.5"/></g>
<g transform="translate(9.0 364.3)" stroke="#333" stroke-width="0.55" fill="none" stroke-linejoin="round"><rect x="-3.4" y="-3.2" width="6.8" height="6.4" rx=".8"/><path d="M-3.2 2 L-.6 -.8 L1.2 1.2 M1 -1.4 l1.2 1.2" stroke-width=".45"/><circle cx="1.6" cy="-1.4" r=".7"/></g>
<g transform="translate(27.4 364.3)" stroke="#333" stroke-width="0.55" fill="none" stroke-linejoin="round"><path d="M-3.6 -3 H1.4 L3.8 -.6 V3.2 H-3.6 Z M-2 -1.2 H.2 Q1.6 -1 1.6 .6 V1.6"/></g>
<g font-size="4.2" fill="#333" font-family="Liberation Sans, sans-serif"><text x="25.8" y="304">A1</text></g>
<rect x="40.2" y="217.4" width="5.6" height="12.6" rx=".8" fill="#cfd6dc"/><path d="M43 219.5 v8.6" stroke="#d9a77c" stroke-width=".9" stroke-dasharray=".9 1.1"/>
<g stroke="#333" stroke-width=".55" fill="none"><rect x="40.4" y="57.6" width="2.6" height="2"/><rect x="44.2" y="57.6" width="2.6" height="2"/><rect x="40.4" y="60.6" width="2.6" height="2"/><rect x="44.2" y="60.6" width="2.6" height="2"/></g>
<path d="M51.6 62.9 V58 Q51.6 57.4 52.3 57.4 H53.6 L54.4 58.6 H57.6 V62.9 Z" fill="#fff" stroke="#333" stroke-width=".55"/>
<path d="M177.2 58.2 Q179.4 56.6 182.8 57.6 V63 Q179.6 64.4 177.2 63.2 Z M181.4 57.4 V63.6" fill="#fff" stroke="#333" stroke-width=".6"/>
<path d="M293.9 58.8 L296.3 61.2 M296.3 58.8 L293.9 61.2" stroke="#111" stroke-width=".8"/>
<path d="M302 62.6 V59.6 L304.8 57.6 L307.6 59.6 V62.6 Z" fill="#fff" stroke="#333" stroke-width=".55"/>
<rect x="318.8" y="66" width="12.4" height="5" rx=".8" fill="#cfd6dc"/><path d="M321 68.5 h8.4" stroke="#d9a77c" stroke-width=".9" stroke-dasharray=".9 1.1"/>
<path d="M596.6 62.2 V59.8 L598.6 58.4 L601 59.4 V62.2 Z M601.6 61.6 l1.4 1 M603 60.6 v2" fill="none" stroke="#333" stroke-width=".55"/>
<path d="M608 59.6 h2.4 l-1.2 1.4 z" fill="#222"/>
</svg>
<span class="t" style="left:9.4px;top:74.3px;font-size:5.45px;height:6.54px;line-height:6.54px;color:#111;transform:scaleX(0.886);">Конструиров</span>
<span class="t" style="left:9.4px;top:217.8px;font-size:5.45px;height:6.54px;line-height:6.54px;color:#111;transform:scaleX(0.879);">Проекция</span>
<span class="t" style="left:9.4px;top:265.2px;font-size:5.45px;height:6.54px;line-height:6.54px;color:#111;transform:scaleX(0.869);">Документирс</span>
<span class="t" style="left:58.6px;top:57.6px;font-size:5.67px;height:6.80px;line-height:6.80px;color:#222;transform:scaleX(0.891);">[1. 1-й этаж]</span>
<span class="t" style="left:185.2px;top:57.6px;font-size:5.67px;height:6.80px;line-height:6.80px;color:#222;transform:scaleX(0.825);">[3D / Все]</span>
<span class="t" style="left:309.6px;top:57.6px;font-size:5.67px;height:6.80px;line-height:6.80px;color:#222;transform:scaleX(0.838);">[Южный Фасад]</span>
<svg width="711" height="400" viewBox="0 0 711 400">
<rect x="647.6" y="55.5" width="29.4" height="2" fill="#d6d6d6"/>
<rect x="613.6" y="60" width="12.4" height="10.4" fill="#cce4f7"/>
<g stroke="#222" stroke-width=".8" fill="none"><path d="M616.2 68.4 V65.4 L618.8 63.4 L621.4 65 V68.4 Z"/><circle cx="621.8" cy="66.8" r="1.9" fill="#cce4f7"/></g>
<path d="M629.6 61.5 V69" stroke="#d0d0d0" stroke-width=".5"/>
<g stroke="#222" stroke-width=".8" fill="none"><path d="M633.4 68.4 V63.2 H635.6 L636.2 64.2 H640.4 V68.4 Z M634.6 67 l1.6 -1.6 l1.2 1.2 l1.2 -1"/><path d="M646.2 68.4 V63.4 H648.4 L649 64.4 H652.8 V65.4 M646.2 68.4 L647.6 65.4 H653.8 L652.6 68.4 Z"/><path d="M659.2 63 H663.2 L665 64.8 V68.8 H659.2 Z M660.6 61.8 H664.4 L666 63.4 V67.6"/><circle cx="662" cy="66.2" r="1.3" fill="#555"/></g>
<rect x="696.4" y="62" width="13.4" height="8" fill="#dadada"/><rect x="699" y="63.6" width="5.4" height="4.8" fill="#9c9c9c"/><path d="M706.8 64.7 v2.6 l1.5 -1.3 z" fill="#222"/>
<rect x="613.6" y="74.8" width="96.8" height="9.3" rx=".8" fill="#fff" stroke="#bdbdbd" stroke-width=".5"/>
<circle cx="617.6" cy="78.8" r="1.9" fill="none" stroke="#444" stroke-width=".7"/><path d="M619 80.3 l1.6 1.6" stroke="#444" stroke-width=".8"/>
<rect x="613.3" y="245.2" width="97.7" height="8.7" fill="#e2e2e2"/>
<path d="M614.9 88.7 l1.6 1.7 l1.6 -1.7" stroke="#222" stroke-width=".95" fill="none"/>
<path d="M620.8 92.0 v-3 l2.7 -2.1 l2.7 2.1 v3 z" stroke="#2a2a2a" stroke-width=".65" fill="#fff"/><circle cx="626.6" cy="90.4" r="1.8" stroke="#2a2a2a" stroke-width=".65" fill="#fff"/>
<path d="M619.0 97.5 l1.6 1.7 l1.6 -1.7" stroke="#222" stroke-width=".95" fill="none"/>
<path d="M624.9 101.2 v-5 q0 -.7 .7 -.7 h1.5 l.9 1.3 h3.6 q.7 0 .7 .7 v3.7 z" stroke="#2a2a2a" stroke-width=".65" fill="#fff"/>
<path d="M628.7 110.1 v-5 q0 -.7 .7 -.7 h1.5 l.9 1.3 h3.6 q.7 0 .7 .7 v3.7 z" stroke="#2a2a2a" stroke-width=".65" fill="#fff"/>
<path d="M628.7 119.0 v-5 q0 -.7 .7 -.7 h1.5 l.9 1.3 h3.6 q.7 0 .7 .7 v3.7 z" stroke="#2a2a2a" stroke-width=".65" fill="#fff"/>
<path d="M628.7 127.9 v-5 q0 -.7 .7 -.7 h1.5 l.9 1.3 h3.6 q.7 0 .7 .7 v3.7 z" stroke="#2a2a2a" stroke-width=".65" fill="#fff"/>
<path d="M628.7 136.8 v-5 q0 -.7 .7 -.7 h1.5 l.9 1.3 h3.6 q.7 0 .7 .7 v3.7 z" stroke="#2a2a2a" stroke-width=".65" fill="#fff"/>
<path d="M619.0 142.0 l1.6 1.7 l1.6 -1.7" stroke="#222" stroke-width=".95" fill="none"/>
<path d="M625.3 145.4 v-3.2 l1.1 -1 h4.4 l1.1 1 v3.2 z M627.4 141.2 v-1.1 h2.4 v1.1" stroke="#2a2a2a" stroke-width=".65" fill="#fff"/>
<path d="M629.3 154.3 v-3.2 l1.1 -1 h4.4 l1.1 1 v3.2 z M631.4 150.1 v-1.1 h2.4 v1.1" stroke="#2a2a2a" stroke-width=".65" fill="#fff"/>
<path d="M619.0 159.8 l1.6 1.7 l1.6 -1.7" stroke="#222" stroke-width=".95" fill="none"/>
<path d="M625.6 163.2 v-3 l3 -2.1 l3 2.1 v3 z" stroke="#2a2a2a" stroke-width=".65" fill="#fff"/>
<path d="M629.6 172.1 v-3 l3 -2.1 l3 2.1 v3 z" stroke="#2a2a2a" stroke-width=".65" fill="#fff"/>
<path d="M629.6 181.0 v-3 l3 -2.1 l3 2.1 v3 z" stroke="#2a2a2a" stroke-width=".65" fill="#fff"/>
<path d="M629.6 189.8 v-3 l3 -2.1 l3 2.1 v3 z" stroke="#2a2a2a" stroke-width=".65" fill="#fff"/>
<path d="M629.6 198.7 v-3 l3 -2.1 l3 2.1 v3 z" stroke="#2a2a2a" stroke-width=".65" fill="#fff"/>
<g transform="translate(628.3 205.0)" stroke="#2a2a2a" stroke-width=".65" fill="#fff"><rect x="-3.6" y="-3" width="7.2" height="6" rx=".8"/><path d="M-3.6 -1 H3.6 M-1 -1 V3 M1.2 -1 V3 M-2.6 -2 h1.4"/></g>
<g transform="translate(628.3 213.9)" stroke="#2a2a2a" stroke-width=".65" fill="#fff"><rect x="-3.6" y="-3" width="7.2" height="6" rx=".8"/><path d="M-2.6 2 L0 -1.6 L2.4 1.2" stroke-width=".9"/></g>
<g transform="translate(628.3 222.8)" stroke="#2a2a2a" stroke-width=".65" fill="#fff"><circle r="3.4"/><path d="M1.2 -1 Q-1.4 -2 -1.4 0 Q-1.4 2 1.2 1 M-2.8 0 H0" fill="none"/></g>
<g transform="translate(628.3 231.7)" stroke="#2a2a2a" stroke-width=".65" fill="#fff"><rect x="-3.6" y="-3" width="7.2" height="6" rx=".8"/><path d="M-1.4 .6 L0 -1.2 L1.6 -.2 V1.6 H-1.4 Z"/></g>
<path d="M619.0 239.8 l1.6 1.7 l1.6 -1.7" stroke="#222" stroke-width=".95" fill="none"/>
<g transform="translate(627.6 240.6)" stroke="#2a2a2a" stroke-width=".6" fill="#fff"><path d="M-2.8 -2.2 Q0 -3.6 2.8 -2.6 V2.4 Q0 3.8 -2.8 2.8 Z M1.4 -3 V3"/></g>
<g transform="translate(632.6 249.5)" stroke="#111" stroke-width=".8" fill="#fff"><path d="M-3 -2.2 Q0 -3.8 2.8 -2.8 V2.6 Q0 3.8 -3 3 Z M1.5 -3 V3"/></g>
<g transform="translate(632.6 258.4)" stroke="#2a2a2a" stroke-width=".6" fill="#fff"><path d="M-2.8 -2.2 Q0 -3.6 2.8 -2.6 V2.4 Q0 3.8 -2.8 2.8 Z M1.4 -3 V3"/></g>
<path d="M619.0 266.4 l1.6 1.7 l1.6 -1.7" stroke="#222" stroke-width=".95" fill="none"/>
<g transform="translate(629.2 267.2)" stroke="#222" stroke-width=".8" fill="none"><path d="M-2.6 -2.7 h5.2 M-2.6 -.9 h5.2 M-2.6 .9 h5.2 M-2.6 2.7 h5.2"/></g>
<path d="M624.1 274.6 l1.5 1.5 l-1.5 1.5" stroke="#444" stroke-width=".6" fill="none"/>
<rect x="628.8" y="274.5" width="7.6" height="3.4" rx=".5" fill="#777" stroke="#2a2a2a" stroke-width=".6"/><path d="M631.3 274.5 v3.4 M633.9 274.5 v3.4" stroke="#ccc" stroke-width=".5"/>
<path d="M624.1 283.5 l1.5 1.5 l-1.5 1.5" stroke="#444" stroke-width=".6" fill="none"/>
<path d="M630.1 287.2 h6.4 q-.4 -3.4 -3.2 -4.4 q-2.8 1 -3.2 4.4 z M631.1 285.8 h4.4 M632.0 284.4 h2.6" stroke="#333" stroke-width=".55" fill="#bbb"/>
<path d="M624.1 292.4 l1.5 1.5 l-1.5 1.5" stroke="#444" stroke-width=".6" fill="none"/>
<path d="M630.2 296.5 h6.2 v-2 h-2.2 v-3 h-1.6 v3 h-2.4 z" stroke="#333" stroke-width=".55" fill="#fff"/>
<path d="M619.7 301.3 l1.5 1.5 l-1.5 1.5" stroke="#444" stroke-width=".6" fill="none"/>
<g transform="translate(628.0 302.8)" stroke="#2a2a2a" stroke-width=".65" fill="#fff"><rect x="-3.6" y="-3" width="7.2" height="6" rx=".8"/><path d="M-3 -1 H3 M-.6 -1 V2.6" /><rect x="-2.2" y="-.2" width="1" height="1" fill="#333"/></g>
<path d="M619.7 310.2 l1.5 1.5 l-1.5 1.5" stroke="#444" stroke-width=".6" fill="none"/>
<g transform="translate(628.0 311.7)" stroke="#2a2a2a" stroke-width=".65" fill="#fff"><rect x="-3.6" y="-3" width="7.2" height="6" rx=".8"/><path d="M-1.4 -1.2 H1.4 M-1.4 0 H1.4 M-1.4 1.2 H1.4"/></g>
<path d="M619.7 319.1 l1.5 1.5 l-1.5 1.5" stroke="#444" stroke-width=".6" fill="none"/>
<g transform="translate(628.0 320.6)" stroke="#333" stroke-width=".55" fill="#fff"><rect x="-3.4" y="-2.4" width="6.8" height="4.8" rx=".6"/><path d="M-1.6 -2.4 V2.4 M1.6 -2.4 V2.4"/></g>
<path d="M615.9 328.0 l1.5 1.5 l-1.5 1.5" stroke="#444" stroke-width=".6" fill="none"/>
<g transform="translate(624.0 329.5)" stroke="#333" stroke-width=".55" fill="#fff"><rect x="-3.4" y="-2.4" width="6.8" height="4.8" rx=".6"/><path d="M-1.6 -2.4 V2.4 M1.6 -2.4 V2.4"/></g>
<rect x="603.6" y="217.4" width="5.6" height="12.6" rx=".8" fill="#cfd6dc"/><path d="M606.4 219.5 v8.6" stroke="#d9a77c" stroke-width=".9" stroke-dasharray=".9 1.1"/>
<rect x="613.3" y="340.3" width="97.7" height="6.4" fill="#f0f0f0"/>
<rect x="619.4" y="340.6" width="51" height="5.8" fill="#cdcdcd"/>
<path d="M616 342 l-1.4 1.5 l1.4 1.5 M705.6 342 l1.4 1.5 l-1.4 1.5" stroke="#444" stroke-width=".6" fill="none"/>
<circle cx="619" cy="353.8" r="2.2" fill="none" stroke="#a9c9ea" stroke-width=".6"/><circle cx="619" cy="353.8" r=".7" fill="#a9c9ea"/>
<rect x="629" y="351.6" width="6.4" height="4.6" rx=".6" fill="none" stroke="#2d6bb3" stroke-width=".7"/><path d="M629 353 h6.4 M632 353 v3.2" stroke="#2d6bb3" stroke-width=".6"/>
<path d="M642 351.6 L646.4 356 M646.4 351.6 L642 356" stroke="#e0634f" stroke-width=".7"/>
<rect x="613.3" y="361.3" width="97.7" height="8.2" fill="#d4d4d4"/><path d="M615.6 364.8 h3 l-1.5 1.8 z" fill="#222"/>
<g transform="translate(616.8 375.2)" stroke="#333" stroke-width=".5" fill="#fff"><path d="M-2 -1.4 Q0 -2.4 1.8 -1.8 V1.6 Q0 2.4 -2 2 Z M1 -2 V2"/></g>
<rect x="614" y="381.3" width="97" height="8" fill="#dddddd"/>
<g stroke="#444" stroke-width=".6" fill="#f0f0f0"><rect x="638.4" y="392.4" width="4.4" height="3.4"/><rect x="639.8" y="393.8" width="4.4" height="3.4"/></g>
<g stroke="#333" stroke-width=".75" fill="none"><circle cx="44.6" cy="386" r="2.4"/><path d="M42.8 387.8 l-1.8 1.7"/></g>
<g stroke="#c9c9c9" stroke-width=".7" fill="none"><circle cx="53" cy="386" r="2.3"/><path d="M54.8 387.8 l1.5 1.5"/></g>
<g stroke="#444" stroke-width=".7" fill="none"><circle cx="62.4" cy="386" r="2.4"/><path d="M64.2 387.8 l1.7 1.7 M61.2 386 h2.4 M62.4 384.8 v2.4"/></g>
<path d="M68.2 383.4 V389.8 M90.4 383.4 V389.8" stroke="#cfcfcf" stroke-width=".6"/>
<g stroke="#444" stroke-width=".6" fill="none"><path d="M71.8 386.4 Q74.6 383.6 77.4 386.4 Q74.6 388.8 71.8 386.4 Z"/><circle cx="74.6" cy="386.8" r=".9" fill="#444"/></g>
<path d="M83.2 384.4 v4.2 l1 -1 l.8 1.6 l.7 -.3 l-.8 -1.6 h1.3 z" fill="#333"/>
<g stroke="#222" stroke-width=".8" fill="none"><circle cx="95.4" cy="386" r="2.4"/><path d="M97.2 387.9 l1.8 1.8" stroke-width="1.1"/><circle cx="95.4" cy="386" r=".9" fill="#666" stroke="none"/></g>
<path d="M133.9 385.3 v2.4 l1.4 -1.2 z" fill="#222"/>
<path d="M141 386.6 h4 M143.2 385 l1.8 1.6 l-1.8 1.6" stroke="#c4c4c4" stroke-width=".6" fill="none"/>
<path d="M181.4 385.3 v2.4 l1.4 -1.2 z" fill="#222"/>
<rect x="188.6" y="385.2" width="5.4" height="2.8" fill="none" stroke="#333" stroke-width=".6"/>
<path d="M228.9 385.3 v2.4 l1.4 -1.2 z" fill="#222"/>
<g transform="translate(238.3 386.5)" stroke="#333" stroke-width=".55" fill="none"><path d="M-2.2 -.6 L.4 -2.2 L2.6 -1 V1.4 L0 2.6 L-2.2 1.6 Z"/><circle cx="-.6" cy=".6" r="1.1" fill="#f3f3f3"/></g>
<g transform="translate(285.5 386.5)" stroke="#333" stroke-width=".55" fill="none"><rect x="-2.8" y="-2" width="5.6" height="4"/><path d="M-2.8 0 H2.8 M-1 -2 V2 M1 -2 V2"/></g>
<g transform="translate(333.8 386.5)" stroke="#333" stroke-width=".6" fill="none"><path d="M-1.8 -2.2 V.6 Q0 3 1.8 .6 V-2.2 M0 2.2 V3"/></g>
<g transform="translate(381.0 386.5)" stroke="#333" stroke-width=".55" fill="none"><rect x="-2.8" y="-2" width="5.6" height="4"/><path d="M-2.8 0 H2.8 M-1 -2 V2 M1 -2 V2"/></g>
<g transform="translate(429.5 386.5)" stroke="#333" stroke-width=".55" fill="none"><path d="M-2.2 -.6 L.4 -2.2 L2.6 -1 V1.4 L0 2.6 L-2.2 1.6 Z"/><circle cx="-.6" cy=".6" r="1.1" fill="#f3f3f3"/></g>
<g transform="translate(476.8 386.5)" stroke="#333" stroke-width=".55" fill="none"><path d="M-2.6 2.2 L0 -2.4 L2.6 2.2 Z"/><circle cx="1" cy=".8" r="1" fill="#f3f3f3"/></g>
<g transform="translate(523.8 386.5)" stroke="#333" stroke-width=".55" fill="none"><path d="M-2.2 -.6 L.4 -2.2 L2.6 -1 V1.4 L0 2.6 L-2.2 1.6 Z"/><circle cx="-.6" cy=".6" r="1.1" fill="#f3f3f3"/></g>
<g transform="translate(570.5 386.5)" stroke="#333" stroke-width=".55" fill="none"><path d="M-2.2 -.6 L.4 -2.2 L2.6 -1 V1.4 L0 2.6 L-2.2 1.6 Z"/><circle cx="-.6" cy=".6" r="1.1" fill="#f3f3f3"/></g>
<path d="M276.4 385.3 v2.4 l1.4 -1.2 z" fill="#222"/>
<path d="M323.9 385.3 v2.4 l1.4 -1.2 z" fill="#222"/>
<path d="M371.4 385.3 v2.4 l1.4 -1.2 z" fill="#222"/>
<path d="M419.4 385.3 v2.4 l1.4 -1.2 z" fill="#222"/>
<path d="M466.2 385.3 v2.4 l1.4 -1.2 z" fill="#222"/>
<path d="M513.9 385.3 v2.4 l1.4 -1.2 z" fill="#222"/>
<path d="M561.2 385.3 v2.4 l1.4 -1.2 z" fill="#222"/>
<path d="M608.9 385.3 v2.4 l1.4 -1.2 z" fill="#222"/>
<rect x="318.6" y="375.6" width="11.8" height="5.6" rx=".8" fill="#cfd6dc" opacity=".9"/><path d="M320.6 378.4 h8.4" stroke="#d9a77c" stroke-width=".9" stroke-dasharray=".9 1.1"/>
</svg>
<span class="t" style="left:623.5px;top:76.4px;font-size:5.45px;height:6.54px;line-height:6.54px;color:#6a6a6a;transform:scaleX(0.874);">Поиск по Карте Проекта</span>
<span class="t" style="left:629.4px;top:86.9px;font-size:5.34px;height:6.41px;line-height:6.41px;color:#1c1c1c;transform:scaleX(0.850);">Prairie</span>
<span class="t" style="left:634.0px;top:95.8px;font-size:5.34px;height:6.41px;line-height:6.41px;color:#1c1c1c;transform:scaleX(0.840);">Этажи</span>
<span class="t" style="left:637.6px;top:104.7px;font-size:5.34px;height:6.41px;line-height:6.41px;color:#1c1c1c;transform:scaleX(0.931);">3. 3-й этаж</span>
<span class="t" style="left:637.6px;top:113.6px;font-size:5.34px;height:6.41px;line-height:6.41px;color:#1c1c1c;transform:scaleX(0.931);">2. 2-й этаж</span>
<span class="t" style="left:637.6px;top:122.5px;font-size:5.34px;height:6.41px;line-height:6.41px;color:#1c1c1c;transform:scaleX(0.931);">1. 1-й этаж</span>
<span class="t" style="left:637.6px;top:131.4px;font-size:5.34px;height:6.41px;line-height:6.41px;color:#1c1c1c;transform:scaleX(0.902);">-1. Цоколь</span>
<span class="t" style="left:633.6px;top:140.3px;font-size:5.34px;height:6.41px;line-height:6.41px;color:#1c1c1c;transform:scaleX(0.884);">Разрезы</span>
<span class="t" style="left:638.0px;top:149.2px;font-size:5.34px;height:6.41px;line-height:6.41px;color:#1c1c1c;transform:scaleX(0.861);">1 Разрез (Автоматически Перестр</span>
<span class="t" style="left:633.6px;top:158.1px;font-size:5.34px;height:6.41px;line-height:6.41px;color:#1c1c1c;transform:scaleX(0.857);">Фасады</span>
<span class="t" style="left:638.0px;top:167.0px;font-size:5.34px;height:6.41px;line-height:6.41px;color:#1c1c1c;transform:scaleX(0.894);">Восточный Фасад (Автоматическ</span>
<span class="t" style="left:638.0px;top:175.8px;font-size:5.34px;height:6.41px;line-height:6.41px;color:#1c1c1c;transform:scaleX(0.884);">Западный Фасад (Автоматически</span>
<span class="t" style="left:638.0px;top:184.7px;font-size:5.34px;height:6.41px;line-height:6.41px;color:#1c1c1c;transform:scaleX(0.880);">Северный Фасад (Автоматически</span>
<span class="t" style="left:638.0px;top:193.6px;font-size:5.34px;height:6.41px;line-height:6.41px;color:#1c1c1c;transform:scaleX(0.893);">Южный Фасад (Автоматически П</span>
<span class="t" style="left:633.5px;top:202.5px;font-size:5.34px;height:6.41px;line-height:6.41px;color:#1c1c1c;transform:scaleX(0.878);">Развертки</span>
<span class="t" style="left:633.5px;top:211.4px;font-size:5.34px;height:6.41px;line-height:6.41px;color:#1c1c1c;font-style:italic;transform:scaleX(0.852);">Рабочие Листы</span>
<span class="t" style="left:633.5px;top:220.3px;font-size:5.34px;height:6.41px;line-height:6.41px;color:#1c1c1c;font-style:italic;transform:scaleX(0.794);">Детали</span>
<span class="t" style="left:633.5px;top:229.2px;font-size:5.34px;height:6.41px;line-height:6.41px;color:#1c1c1c;font-style:italic;transform:scaleX(0.833);">3D-документы</span>
<span class="t" style="left:633.5px;top:238.1px;font-size:5.34px;height:6.41px;line-height:6.41px;color:#1c1c1c;transform:scaleX(0.851);">3D</span>
<span class="t" style="left:638.5px;top:247.0px;font-size:5.34px;height:6.41px;line-height:6.41px;color:#1c1c1c;font-weight:bold;transform:scaleX(0.873);">Общая Перспектива</span>
<span class="t" style="left:638.5px;top:255.9px;font-size:5.34px;height:6.41px;line-height:6.41px;color:#1c1c1c;transform:scaleX(0.886);">Общая Аксонометрия</span>
<span class="t" style="left:634.6px;top:264.7px;font-size:5.34px;height:6.41px;line-height:6.41px;color:#1c1c1c;transform:scaleX(0.877);">Каталоги</span>
<span class="t" style="left:637.8px;top:273.6px;font-size:5.34px;height:6.41px;line-height:6.41px;color:#1c1c1c;transform:scaleX(0.848);">Элементы</span>
<span class="t" style="left:637.8px;top:282.5px;font-size:5.34px;height:6.41px;line-height:6.41px;color:#1c1c1c;transform:scaleX(0.879);">Компоненты</span>
<span class="t" style="left:637.8px;top:291.4px;font-size:5.34px;height:6.41px;line-height:6.41px;color:#1c1c1c;transform:scaleX(0.896);">Покрытия</span>
<span class="t" style="left:634.0px;top:300.3px;font-size:5.34px;height:6.41px;line-height:6.41px;color:#1c1c1c;transform:scaleX(0.882);">Индексы Проекта</span>
<span class="t" style="left:634.0px;top:309.2px;font-size:5.34px;height:6.41px;line-height:6.41px;color:#1c1c1c;transform:scaleX(0.846);">Ведомости</span>
<span class="t" style="left:634.0px;top:318.1px;font-size:5.34px;height:6.41px;line-height:6.41px;color:#1c1c1c;transform:scaleX(0.892);">Инфо</span>
<span class="t" style="left:629.8px;top:327.0px;font-size:5.34px;height:6.41px;line-height:6.41px;color:#1c1c1c;transform:scaleX(0.864);">Руководство</span>
<span class="t" style="left:622.0px;top:362.8px;font-size:5.34px;height:6.41px;line-height:6.41px;color:#111;transform:scaleX(0.705);">Свойства</span>
<span class="t" style="left:643.7px;top:372.4px;font-size:5.34px;height:6.41px;line-height:6.41px;color:#222;transform:scaleX(0.883);">Общая Перспектива</span>
<span class="t" style="left:645.5px;top:382.7px;font-size:5.34px;height:6.41px;line-height:6.41px;color:#222;transform:scaleX(0.938);">Параметры...</span>
<span class="t" style="left:653.5px;top:392.3px;font-size:5.67px;height:6.80px;line-height:6.80px;color:#8a8a8a;transform:scaleX(0.934);">GRAPHISOFT ID</span>
<span class="t" style="left:113.8px;top:384.0px;font-size:5.23px;height:6.28px;line-height:6.28px;color:#b9b9b9;transform:scaleX(0.844);">Н/Д</span>
<span class="t" style="left:161.5px;top:384.0px;font-size:5.23px;height:6.28px;line-height:6.28px;color:#b9b9b9;transform:scaleX(0.844);">Н/Д</span>
<span class="t" style="left:207.5px;top:384.0px;font-size:5.23px;height:6.28px;line-height:6.28px;color:#222;transform:scaleX(0.865);">1:100</span>
<span class="t" style="left:245.0px;top:384.0px;font-size:5.23px;height:6.28px;line-height:6.28px;color:#222;transform:scaleX(0.878);">08 Визуализ...</span>
<span class="t" style="left:295.0px;top:384.0px;font-size:5.23px;height:6.28px;line-height:6.28px;color:#222;transform:scaleX(0.859);">Вся Модель</span>
<span class="t" style="left:340.0px;top:384.0px;font-size:5.23px;height:6.28px;line-height:6.28px;color:#222;transform:scaleX(0.898);">01 Архитект...</span>
<span class="t" style="left:388.5px;top:384.0px;font-size:5.23px;height:6.28px;line-height:6.28px;color:#222;transform:scaleX(0.822);">04 Проект - ...</span>
<span class="t" style="left:438.5px;top:384.0px;font-size:5.23px;height:6.28px;line-height:6.28px;color:#222;transform:scaleX(0.865);">Без Замены</span>
<span class="t" style="left:483.0px;top:384.0px;font-size:5.23px;height:6.28px;line-height:6.28px;color:#222;transform:scaleX(0.857);">01 Существ...</span>
<span class="t" style="left:530.0px;top:384.0px;font-size:5.23px;height:6.28px;line-height:6.28px;color:#222;transform:scaleX(0.861);">Только Осн...</span>
<span class="t" style="left:577.0px;top:384.0px;font-size:5.23px;height:6.28px;line-height:6.28px;color:#222;transform:scaleX(0.876);">Стиль 3D-о...</span>
<span class="t" style="left:0.2px;top:393.3px;font-size:5.23px;height:6.28px;line-height:6.28px;color:#1a1a1a;transform:scaleX(0.931);">Щелкните на элементе или начертите область выбора. Нажмите и не отпускайте Ctrl+Shift для переключения выбора элемента/подэлемента.</span>
</div></body></html>
